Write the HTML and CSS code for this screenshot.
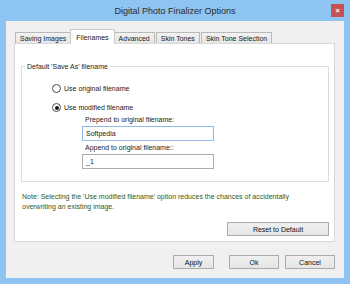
FILE: index.html
```html
<!DOCTYPE html>
<html lang="en-US">
<head>
	<meta charset="UTF-8">
	<meta name="viewport" content="width=device-width, initial-scale=1.0">
	<title>Digital Photo Finalizer Options</title>
	<link rel="stylesheet" href="styles.css">
</head>
<body>
	<div class="window">
		<div class="titlebar">
			<span class="title">Digital Photo Finalizer Options</span>
			<span class="close">&#215;</span>
		</div>

		<div class="client">
			<div class="tabs">
				<span class="tab">Saving Images</span>
				<span class="tab active">Filenames</span>
				<span class="tab">Advanced</span>
				<span class="tab">Skin Tones</span>
				<span class="tab">Skin Tone Selection</span>
			</div>

			<div class="panel">
				<fieldset class="group">
					<legend>Default 'Save As' filename</legend>
					<label class="radio"><span class="dot"></span>Use original filename</label>
					<label class="radio checked"><span class="dot"></span>Use modified filename</label>
					<div class="sub">
						<div class="field-label">Prepend to original filename:</div>
						<div class="input focused">Softpedia</div>
						<div class="field-label">Append to original filename::</div>
						<div class="input">_1</div>
					</div>
				</fieldset>

				<p class="note">Note: Selecting the 'Use modified filename' option reduces the chances of accidentally overwriting an existing image.</p>

				<div class="panel-actions">
					<button class="btn reset">Reset to Default</button>
				</div>
			</div>

			<div class="actions">
				<button class="btn apply">Apply</button>
				<button class="btn">Ok</button>
				<button class="btn">Cancel</button>
			</div>
		</div>
	</div>
</body>
</html>
```

FILE: styles.css
```css
body{
	margin: 0;
	width: 350px;
	height: 284px;
	overflow: hidden;
}

.window{
	box-sizing: border-box;
	height: 284px;
	padding: 0 6px 6px;
	background-color: #8ec4f2;
	display: flex;
	flex-direction: column;
	font-family: "Liberation Sans", Arial, sans-serif;
	font-size: 7px;
	color: #1a1a1a;
}

.titlebar{
	position: relative;
	height: 21px;
	display: flex;
	align-items: center;
	justify-content: center;
}

.title{
	font-size: 9px;
	color: #2b2b2b;
}

.close{
	position: absolute;
	right: 0;
	top: 4px;
	width: 13px;
	height: 13px;
	background-color: #c75050;
	color: #fff;
	font-size: 8px;
	font-weight: bold;
	display: flex;
	align-items: center;
	justify-content: center;
}

.client{
	flex: 1;
	background-color: #f0f0f0;
	padding: 8px 9px 9px 8px;
	display: flex;
	flex-direction: column;
}

.tabs{
	height: 14px;
	padding-left: 1px;
	display: flex;
	align-items: flex-end;
}

.tab{
	box-sizing: border-box;
	height: 11px;
	padding: 0 4px;
	margin-right: 1px;
	border: 1px solid #b9b9b9;
	border-bottom: none;
	background: linear-gradient(#f2f2f2, #e6e6e6);
	display: flex;
	align-items: center;
	white-space: nowrap;
}

.tab.active{
	position: relative;
	z-index: 1;
	height: 15px;
	margin: 0 -1px -1px -2px;
	padding: 0 5px;
	background: #fff;
	border-color: #c9c9c9;
}

.panel{
	flex: 1;
	background-color: #fff;
	border: 1px solid #d9d9d9;
	padding: 0 5px 0 6px;
	display: flex;
	flex-direction: column;
}

.group{
	margin: 18px 0 0;
	padding: 12px 0 12px;
	min-width: 0;
	border: 1px solid #dcdcdc;
}

.group legend{
	margin-left: 3px;
	padding: 0 2px;
	line-height: 9px;
}

.radio{
	display: flex;
	align-items: center;
	height: 11px;
	margin-left: 30px;
}

.radio + .radio{
	margin-top: 8px;
}

.dot{
	box-sizing: border-box;
	width: 9px;
	height: 9px;
	margin-right: 3px;
	border: 1px solid #4d4d4d;
	border-radius: 50%;
	background: #fff;
	display: flex;
	align-items: center;
	justify-content: center;
}

.radio.checked .dot::after{
	content: "";
	width: 4px;
	height: 4px;
	border-radius: 50%;
	background: #111;
}

.sub{
	margin-left: 60px;
	margin-top: 2px;
	width: 132px;
}

.field-label{
	padding-left: 3px;
	line-height: 9px;
	margin-bottom: 2px;
}

.input{
	box-sizing: border-box;
	height: 15px;
	padding-left: 3px;
	border: 1px solid #abadb3;
	background: #fff;
	display: flex;
	align-items: center;
	margin-bottom: 2px;
}

.input.focused{
	border-color: #8fb9e6;
}

.input:last-child{
	margin-bottom: 0;
}

.note{
	width: 296px;
	margin: 10px 0 0;
	padding-left: 1px;
	line-height: 10px;
	color: #2f5a17;
}

.panel-actions{
	margin-top: 10px;
	display: flex;
	justify-content: flex-end;
}

.btn{
	box-sizing: border-box;
	height: 14px;
	width: 50px;
	padding: 0;
	border: 1px solid #acacac;
	border-radius: 0;
	background: linear-gradient(#f0f0f0, #e5e5e5);
	font-family: "Liberation Sans", Arial, sans-serif;
	font-size: 7px;
	color: #111;
}

.btn.reset{
	width: 102px;
}

.btn.apply{
	width: 41px;
	margin-right: 9px;
}

.actions{
	margin-top: 13px;
	display: flex;
	justify-content: flex-end;
	gap: 6px;
}
```
